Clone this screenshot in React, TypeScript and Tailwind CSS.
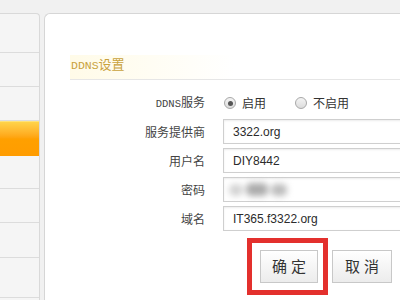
import React from "react"

const inputCls =
  "h-[25px] w-[200px] shrink-0 border border-[#cfcfcf] bg-white px-[9px] flex items-center text-[12px] text-[#2b2b2b] shadow-[inset_0_1px_2px_rgba(0,0,0,0.08)] font-[family-name:'Liberation_Sans',Arial,sans-serif]"

const labelCls =
  "w-[161px] shrink-0 text-right text-[12px] text-[#444] font-[family-name:'Noto_Sans_CJK_SC',sans-serif] pr-[1px]"

const monoCls = "font-[family-name:'Liberation_Mono','Noto_Sans_CJK_SC',monospace]"

function Radio({ checked, label }: { checked?: boolean; label: string }) {
  return (
    <label className="flex items-center gap-[6px]">
      <span className="w-[12px] h-[12px] rounded-full border border-[#a8a8a8] bg-gradient-to-b from-[#f4f4f4] to-[#dcdcdc] flex items-center justify-center">
        {checked && <span className="w-[5px] h-[5px] rounded-full bg-[#555]" />}
      </span>
      <span className="text-[12px] text-[#333] font-[family-name:'Noto_Sans_CJK_SC',sans-serif]">{label}</span>
    </label>
  )
}

function Row({ label, children }: { label: React.ReactNode; children: React.ReactNode }) {
  return (
    <div className="flex items-center">
      <div className={labelCls}>{label}</div>
      <div className="ml-[17px] shrink-0">{children}</div>
    </div>
  )
}

export default function App() {
  const sideRows = ["h-[39px]", "h-[34px]", "h-[34px]"]
  const sideRowsBottom = ["h-[33px]", "h-[34px]", "h-[35px]", "h-[40px]"]

  return (
    <div className="w-[400px] h-[300px] overflow-hidden bg-[#f1f1f1] pt-[13px] flex">
      {/* Sidebar */}
      <div className="w-[40px] shrink-0 bg-[#f5f5f5] border-r border-t border-[#d9d9d9] rounded-tr-[4px] flex flex-col">
        {sideRows.map((h, i) => (
          <div key={i} className={`${h} border-b border-[#dcdcdc]`} />
        ))}
        <div className="h-[35px] bg-gradient-to-b from-[#ffd34a] via-[#ffa000] to-[#ff9c00] border-t border-[#ffe27a]" />
        {sideRowsBottom.map((h, i) => (
          <div key={i} className={`${h} border-b border-[#dcdcdc]`} />
        ))}
      </div>

      {/* Main panel */}
      <div className="ml-[4px] flex-1 min-w-0 bg-white border-l border-t border-[#d6d6d6] rounded-tl-[6px] pt-[41px] overflow-hidden">
        <div className="ml-[25px] h-[25px] border-b border-[#e6e6e6] bg-gradient-to-r from-[#fffbe8] via-white to-white">
          <div className={`pl-[1px] leading-[22px] text-[13px] text-[#c9a23c] ${monoCls}`}>
            <span className="text-[11.5px]">DDNS</span>设置
          </div>
        </div>

        <div className="mt-[11px] flex flex-col gap-[4px]">
          <div className="h-[24px] flex items-center">
            <div className={labelCls}>
              <span className={`${monoCls} text-[10.5px]`}>DDNS</span>服务
            </div>
            <div className="ml-[18px] flex items-center gap-[29px] shrink-0">
              <Radio checked label="启用" />
              <Radio label="不启用" />
            </div>
          </div>

          <Row label="服务提供商">
            <div className={inputCls}>3322.org</div>
          </Row>
          <Row label="用户名">
            <div className={inputCls}>DIY8442</div>
          </Row>
          <Row label="密码">
            <div className={inputCls}>
              <div className="flex items-center gap-[3px] blur-[3px] -ml-[4px]">
                <span className="w-[14px] h-[12px] rounded-full bg-[#d2d2d2]" />
                <span className="w-[22px] h-[13px] rounded-[5px] bg-[#acacac]" />
                <span className="w-[16px] h-[12px] rounded-[5px] bg-[#bcbcbc]" />
              </div>
            </div>
          </Row>
          <Row label="域名">
            <div className={inputCls}>IT365.f3322.org</div>
          </Row>
        </div>

        <div className="mt-[7px] ml-[202px] flex items-start">
          <div className="shrink-0 border-[5px] border-[#e3302d] pl-[8px] pr-[5px] py-[7px]">
            <button className="w-[58px] h-[33px] border border-[#c8c8c8] bg-gradient-to-b from-white to-[#ececec] text-[15px] text-[#333] tracking-[4px] pl-[4px] font-[family-name:'Noto_Sans_CJK_SC',sans-serif]">
              确定
            </button>
          </div>
          <button className="shrink-0 ml-[4px] mt-[12px] w-[60px] h-[33px] border border-[#c8c8c8] bg-gradient-to-b from-white to-[#ececec] text-[15px] text-[#333] tracking-[4px] pl-[4px] font-[family-name:'Noto_Sans_CJK_SC',sans-serif]">
            取消
          </button>
        </div>
      </div>
    </div>
  )
}
